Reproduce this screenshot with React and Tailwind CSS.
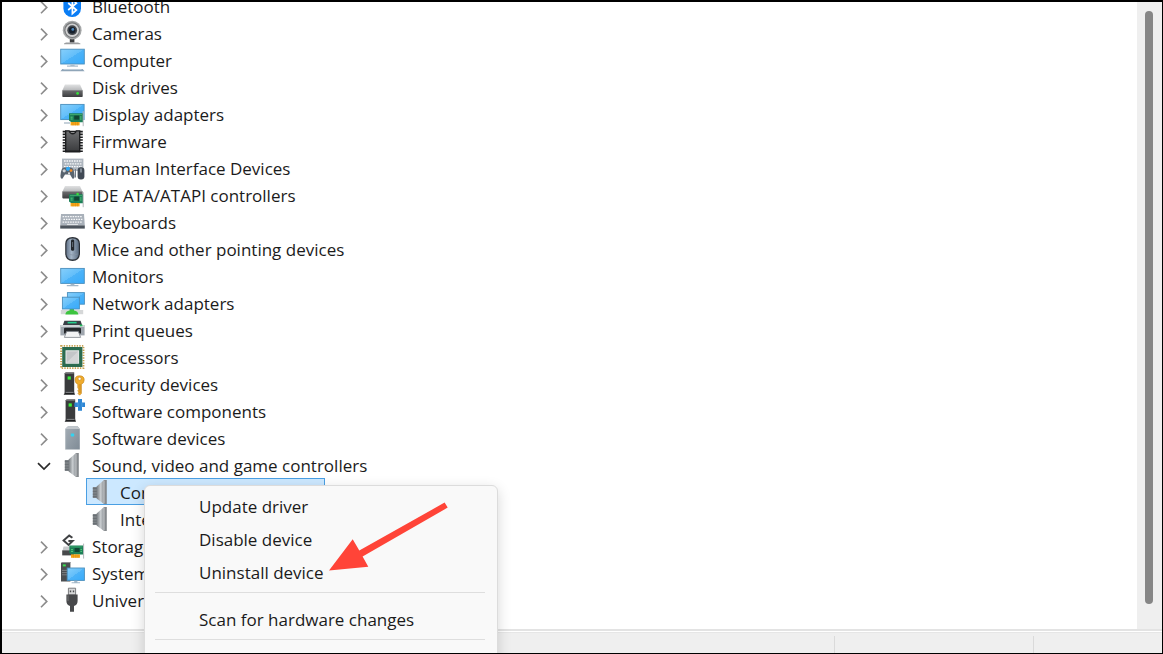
import React from "react";

const Defs = () => (
  <svg className="absolute h-0 w-0" aria-hidden="true">
    <defs>
      <linearGradient id="screen" x1="0" y1="0" x2="1" y2="1">
        <stop offset="0" stopColor="#86cffb" />
        <stop offset="0.5" stopColor="#62befa" />
        <stop offset="0.5" stopColor="#4db3f8" />
        <stop offset="1" stopColor="#38abfb" />
      </linearGradient>
      <linearGradient id="steel" x1="0" y1="0" x2="1" y2="0">
        <stop offset="0" stopColor="#74797d" />
        <stop offset="0.55" stopColor="#c9cdd0" />
        <stop offset="1" stopColor="#8b9095" />
      </linearGradient>
      <linearGradient id="lid" x1="0" y1="0" x2="0" y2="1">
        <stop offset="0" stopColor="#e0e1e2" />
        <stop offset="1" stopColor="#b4b6b8" />
      </linearGradient>
      <linearGradient id="dark" x1="0" y1="0" x2="0" y2="1">
        <stop offset="0" stopColor="#6c6d6f" />
        <stop offset="1" stopColor="#3c3d3f" />
      </linearGradient>
      <linearGradient id="slate" x1="0" y1="0" x2="1" y2="0">
        <stop offset="0" stopColor="#64748a" />
        <stop offset="0.4" stopColor="#a3b4c6" />
        <stop offset="1" stopColor="#5b6c80" />
      </linearGradient>
      <linearGradient id="tower" x1="0" y1="0" x2="1" y2="1">
        <stop offset="0" stopColor="#a4adb5" />
        <stop offset="1" stopColor="#7f8b96" />
      </linearGradient>
    </defs>
  </svg>
);

const Card = ({ x, y }) => (
  <g transform={`translate(${x} ${y})`}>
    <path d="M0 0.6H14V9.6H2.4L0 8Z" fill="#1d8058" />
    <path d="M1 1.4H13V2.4H1Z" fill="#3ba56c" />
    <rect x="5.2" y="3" width="5" height="4" fill="#114533" />
    <path d="M1.6 4.6h2M1.6 6.4h2M11 4.4h1.6M11 6.4h1.6" stroke="#5fd07f" strokeWidth="0.9" />
    <rect x="1.6" y="9.4" width="9" height="3.4" fill="#f6a619" />
    <path d="M4 9.4v3.4M6.4 9.4v3.4M8.6 9.4v3.4" stroke="#d7820c" strokeWidth="0.5" />
    <path d="M14.2 -1.4V13.6" stroke="#b4b7ba" strokeWidth="1" />
  </g>
);

const Screen = ({ x, y, w, h }) => (
  <rect x={x + 0.4} y={y + 0.4} width={w - 0.8} height={h - 0.8} fill="url(#screen)" stroke="#4a8fbd" strokeWidth="0.9" />
);

const Disk = ({ y }) => (
  <g transform={`translate(0 ${y})`}>
    <path d="M5 0H20L22.7 6H2.3Z" fill="url(#lid)" />
    <path d="M2.3 5.6H22.7V11.6Q22.7 12.4 22 12.4H3Q2.3 12.4 2.3 11.6Z" fill="url(#dark)" />
  </g>
);

const ServerTower = ({ x }) => (
  <g transform={`translate(${x} 0)`}>
    <path d="M1 1.6 2 0.6H10.6V21H1Z" fill="#3a3b3d" />
    <path d="M1 1.6 2 0.6H10.6L9.8 2H1Z" fill="#6a6b6d" />
    <path d="M0 22.8 1.4 20.4H10.6L11.4 22.8Z" fill="#1f2022" />
    <path d="M2 20.4H10" stroke="#c5c6c7" strokeWidth="0.6" />
    <rect x="4" y="4.4" width="3.2" height="3.2" fill="#3bf03b" />
  </g>
);

const Keys = ({ x, y, w }) => (
  <g stroke="#f7f8fa" strokeWidth="1.3">
    <path strokeDasharray="1.6 0.9" d={`M${x} ${y}h${w}M${x + 0.8} ${y + 2.8}h${w - 1}M${x} ${y + 5.6}h${w}`} />
  </g>
);

const drawings = {
  bluetooth: (
    <>
      <rect x="3.4" y="0" width="17.6" height="23" rx="8.6" fill="#0a7df5" />
      <path d="M8.2 9 16.4 16 12.4 19.6V5.6L16.4 9.2 8.2 16" fill="none" stroke="#fff" strokeWidth="1.7" />
    </>
  ),
  camera: (
    <>
      <path d="M9.8 17H14.4V21.6H9.8Z" fill="#3c3d3f" />
      <path d="M4 22.4 6 21.4H18L20.4 22.4V23.2H4Z" fill="#9c9ea0" />
      <circle cx="12.2" cy="9.2" r="9.4" fill="#a5a7a8" />
      <circle cx="12.2" cy="9.2" r="7.9" fill="#77797b" />
      <circle cx="12.2" cy="9.2" r="6.7" fill="#d1d2d3" />
      <circle cx="12.2" cy="9.2" r="4.9" fill="#42464b" />
      <circle cx="12.2" cy="9.2" r="3.2" fill="#16202d" />
      <circle cx="12.8" cy="8.4" r="1.4" fill="#4c87bd" />
    </>
  ),
  computer: (
    <>
      <Screen x={0.3} y={0.8} w={24.4} h={15.6} />
      <path d="M10.4 16.4H14.6V17.6H18V18.8H7V17.6H10.4Z" fill="#a9bccb" />
      <path d="M2.4 21H22.6L24.6 23.2H0.4Z" fill="#8fa5b8" />
      <path d="M3.4 21.4H21.6" stroke="#d9e3eb" strokeWidth="0.7" />
    </>
  ),
  disk: (
    <>
      <Disk y={9.6} />
      <circle cx="17.6" cy="18.4" r="1.4" fill="#35e03a" />
    </>
  ),
  display: (
    <>
      <Screen x={0.3} y={2} w={24.2} h={16} />
      <path d="M4 20.4H10V21.6H4Z" fill="#9fb2c2" />
      <Card x={9} y={10.6} />
    </>
  ),
  firmware: (
    <>
      <path d="M2.7 2.6H22.8M2.7 5.4H22.8M2.7 8.2H22.8M2.7 11H22.8M2.7 13.8H22.8M2.7 16.6H22.8M2.7 19.4H22.8M2.7 22.2H22.8" stroke="#1c1d1f" strokeWidth="1.6" />
      <path d="M5 1.2H9.6Q10 4 12.7 4T15.8 1.2H20.4V23.4H5Z" fill="#1d1e20" />
      <path d="M6.4 2.6H8.8Q9.6 5.4 12.7 5.4T16.6 2.6H19V21.6H6.4Z" fill="url(#dark)" />
    </>
  ),
  hid: (
    <>
      <path d="M2 2.6H23.4V15H2Z" fill="#aeb6bf" />
      <Keys x={4} y={5} w={18} />
      <path d="M0.4 20Q1 11.4 4.4 11.6H10.6Q14 11.4 14.6 20 14.4 23.6 12.4 22.4L10 18.6H5L2.6 22.4Q0.6 23.6 0.4 20Z" fill="#59646f" />
      <circle cx="4.2" cy="14.8" r="1.6" fill="#cdd3d8" />
      <circle cx="8" cy="12.8" r="2.1" fill="#2fa7f3" />
      <circle cx="11" cy="14.6" r="1.4" fill="#f08b25" />
      <circle cx="9" cy="17.2" r="1" fill="#e9ebed" />
      <rect x="17.6" y="11.2" width="6.8" height="12.2" rx="3.2" fill="#414a55" />
      <path d="M21 12.4v4" stroke="#aeb9c4" strokeWidth="1.2" />
      <path d="M15.4 13v8.6" stroke="#707a84" strokeWidth="1.2" />
    </>
  ),
  ide: (
    <>
      <Disk y={3} />
      <Card x={9} y={10.6} />
      <circle cx="17.6" cy="11" r="1.3" fill="#35e03a" />
    </>
  ),
  keyboard: (
    <>
      <path d="M1 4H24L24.8 15.6H0.2Z" fill="#a9b1ba" />
      <path d="M0.2 15.4H24.8V18.6H0.2Z" fill="#4c545d" />
      <Keys x={2.6} y={6.6} w={20} />
      <path d="M7 14.4H18" stroke="#e6e9ec" strokeWidth="1" />
    </>
  ),
  mouse: (
    <>
      <path d="M5.2 7Q5.2 0 12.6 0T20 7V16Q20 24 12.6 24T5.2 16Z" fill="#2b3037" />
      <path d="M6.4 7Q6.4 1.4 12.6 1.4T18.8 7V16Q18.8 22.6 12.6 22.6T6.4 16Z" fill="url(#slate)" />
      <rect x="11" y="2.4" width="3.2" height="11.4" rx="1.4" fill="#23272c" />
      <path d="M12.6 5v5" stroke="#69747f" strokeWidth="0.9" />
      <path d="M7.6 17Q12.6 19 17.6 17" stroke="#8795a4" strokeWidth="0.7" fill="none" />
    </>
  ),
  monitor: (
    <>
      <Screen x={0.3} y={4} w={24.4} h={15.8} />
      <path d="M10.6 19.8H14.4V21H18.4V22.2H6.8V21H10.6Z" fill="#a3b7c7" />
    </>
  ),
  network: (
    <>
      <Screen x={7} y={1.2} w={17.8} h={12.4} />
      <rect x="0.8" y="19" width="22.4" height="4.2" fill="#d5d7d8" />
      <path d="M9.6 17H14V19.4Q18 20 18.4 23.4H5.4Q5.6 20 9.6 19.4Z" fill="#3cc43f" />
      <Screen x={2} y={5.8} w={17.8} h={12.6} />
    </>
  ),
  printer: (
    <>
      <path d="M4.4 2.8H20.6L22.4 8H2.6Z" fill="#3a3f46" />
      <path d="M7.6 4.6H16.6" stroke="#25cf8d" strokeWidth="1.6" />
      <path d="M0.4 7H24.6V17.4H0.4Z" fill="#9fa6ae" />
      <path d="M0.4 7H24.6V9H0.4Z" fill="#cfd3d7" />
      <rect x="19.8" y="6.6" width="2.6" height="1.6" fill="#22c55e" />
      <path d="M4 10.6Q4 9.8 5 9.8H20Q21 9.8 21 10.6V15.4H4Z" fill="#25282c" />
      <path d="M6.6 13.4H18.4L20.6 19.4H4.4Z" fill="#f2f3f4" stroke="#7d838a" strokeWidth="0.8" />
    </>
  ),
  processor: (
    <>
      <rect x="1.1" y="0.9" width="22.4" height="22.2" fill="none" stroke="#c7a251" strokeWidth="1.8" strokeDasharray="1.4 1.2" />
      <rect x="2.2" y="2" width="20.2" height="20" fill="#2b6b50" />
      <rect x="6" y="5.8" width="12.6" height="12.4" fill="#c3c6c8" stroke="#e9ebec" strokeWidth="1" />
      <path d="M6.6 17.6 18 6.4V17.6Z" fill="#d4d6d7" />
    </>
  ),
  security: (
    <>
      <ServerTower x={3.6} />
      <path d="M15 8Q15 3.8 19.6 3.8T24.2 8Q24.2 11 21.4 12.2V21.4L19.6 23.2 18 21.6 18.8 20.2 17.8 18.8 18.8 17.2 17.8 15.8V12.2Q15 11 15 8Z" fill="#f0ac2d" stroke="#c17f16" strokeWidth="0.6" />
      <circle cx="19.6" cy="6.8" r="1.5" fill="#fff" stroke="#b77a18" strokeWidth="0.5" />
      <path d="M20 12v9" stroke="#b77a18" strokeWidth="0.7" />
    </>
  ),
  component: (
    <>
      <ServerTower x={4.6} />
      <path d="M18 0H22V3.6H25V8H22V11.8H18V8H14.4V3.6H18Z" fill="#2d86d4" />
      <path d="M18 3.6V8M22 3.6V8" stroke="#5aa6e4" strokeWidth="0.7" />
    </>
  ),
  software: (
    <>
      <path d="M5.2 3 8 0.2H17.6L19.8 3V23.4H5.2Z" fill="url(#tower)" />
      <path d="M5.2 3 8 0.2H17.6L19.8 3Z" fill="#c1c7cc" />
      <path d="M5.6 3.2V23" stroke="#bac1c7" strokeWidth="0.8" />
      <rect x="10.8" y="7.6" width="3.4" height="3" rx="0.8" fill="#32d3f0" />
    </>
  ),
  speaker: (
    <>
      <path d="M4.8 7H9.6V18H4.8Z" fill="#7e8387" />
      <path d="M4.8 8.6H9.6M4.8 11.4H9.6M4.8 14.2H9.6M4.8 16.6H9.6" stroke="#5f6468" strokeWidth="0.7" />
      <path d="M8.6 6.4 16 0V24L8.6 18.6Z" fill="url(#steel)" />
      <path d="M16 0H18.8V24H16Z" fill="#85898d" />
      <path d="M16 0.6V23.4" stroke="#d5d8da" strokeWidth="0.8" />
    </>
  ),
  storage: (
    <>
      <path d="M12.4 3.8 9.2 1.6 3.6 6.6 8.6 11 12.6 7H8.4" fill="none" stroke="#404244" strokeWidth="2" />
      <path d="M3.6 12.4H13V17H2.4Z" fill="#c7c9cb" />
      <path d="M2.2 16.4H14V21.4H2.2Z" fill="#48494b" />
      <Card x={9.4} y={11} />
    </>
  ),
  system: (
    <>
      <path d="M1 2 2.4 1H10.4V20.6H1Z" fill="#4b4e51" />
      <path d="M1 2 2.4 1H10.4V2Z" fill="#8b8e90" />
      <rect x="2.8" y="3.4" width="3" height="2" fill="#3be052" />
      <path d="M2 9.4H8M2 11.6H8M2 13.8H8" stroke="#929699" strokeWidth="0.7" />
      <Screen x={6.8} y={6.6} w={18} h={13.2} />
      <path d="M14.2 19.8H17.4V21.2H20V22.2H11.6V21.2H14.2Z" fill="#a3b7c7" />
    </>
  ),
  usb: (
    <>
      <path d="M8.4 0.2H15.6V7H8.4Z" fill="#d6d7d8" stroke="#6f7173" strokeWidth="0.9" />
      <path d="M9.8 2.4H11.2V4.2H9.8ZM12.8 2.4H14.2V4.2H12.8Z" fill="#4a4b4d" />
      <path d="M6.4 6.4H17.6V13Q17.6 17 14 18V23.8H10V18Q6.4 17 6.4 13Z" fill="#48494b" />
      <path d="M8 7.4V13" stroke="#737476" strokeWidth="1" />
    </>
  ),
};

const DeviceIcon = ({ name }) => (
  <svg viewBox="0 0 25 25" className="h-[25px] w-[25px] shrink-0 overflow-visible" aria-hidden="true">
    {drawings[name]}
  </svg>
);

const before = [
  ["bluetooth", "Bluetooth"],
  ["camera", "Cameras"],
  ["computer", "Computer"],
  ["disk", "Disk drives"],
  ["display", "Display adapters"],
  ["firmware", "Firmware"],
  ["hid", "Human Interface Devices"],
  ["ide", "IDE ATA/ATAPI controllers"],
  ["keyboard", "Keyboards"],
  ["mouse", "Mice and other pointing devices"],
  ["monitor", "Monitors"],
  ["network", "Network adapters"],
  ["printer", "Print queues"],
  ["processor", "Processors"],
  ["security", "Security devices"],
  ["component", "Software components"],
  ["software", "Software devices"],
];

const after = [
  ["storage", "Storage controllers"],
  ["system", "System devices"],
  ["usb", "Universal Serial Bus controllers"],
];

const Row = ({ icon, label, open = false, children }) => (
  <li role="treeitem" aria-expanded={open}>
    <div className="flex h-[27px] items-center gap-[7px] pt-[2px]">
      <div className="flex items-center gap-[8px]">
        <button type="button" aria-label={`${open ? "Collapse" : "Expand"} ${label}`} className="flex h-[25px] w-4 items-center justify-center">
          <svg viewBox="0 0 16 16" className="h-4 w-4" fill="none" aria-hidden="true">
            {open ? (
              <path d="M2 5.2 8 11 14 5.2" stroke="#2b2b2b" strokeWidth="1.7" />
            ) : (
              <path d="M5 2.6 10.8 8.4 5 14.2" stroke="#8c8c8c" strokeWidth="1.6" />
            )}
          </svg>
        </button>
        <DeviceIcon name={icon} />
      </div>
      <span>{label}</span>
    </div>
    {children}
  </li>
);

const MenuItem = ({ children }) => (
  <button type="button" role="menuitem" className="block h-[33px] w-full pl-[54px] text-left">
    {children}
  </button>
);

const Separator = () => <hr className="mr-[12px] ml-[10px] border-t border-[#dedede]" />;

const ContextMenu = () => (
  <div
    role="menu"
    className="absolute top-[7px] left-[58px] z-10 h-[240px] w-[354px] rounded-md border border-[#dcdcdc] bg-[#f9f9f9] pt-[4px] shadow-[0_4px_14px_rgba(0,0,0,0.16)]"
  >
    <MenuItem>Update driver</MenuItem>
    <MenuItem>Disable device</MenuItem>
    <MenuItem>Uninstall device</MenuItem>
    <div className="pt-[3px] pb-[10px]">
      <Separator />
    </div>
    <MenuItem>Scan for hardware changes</MenuItem>
    <div className="pt-[3px]">
      <Separator />
    </div>
    <svg viewBox="0 0 120 70" className="pointer-events-none absolute top-[16px] left-[184px] h-[70px] w-[120px]" aria-hidden="true">
      <path d="M0 68.5 23.7 37.3 30.3 48.4 115.6 0.6 118.7 5.6 33.6 54.4 39.3 64.8Z" fill="#ff4438" />
    </svg>
  </div>
);

export default function App() {
  return (
    <div className="relative flex min-h-screen flex-col overflow-hidden border-t-2 border-r border-b border-l-2 border-black bg-white font-['Open_Sans','Noto_Sans',sans-serif] text-[17px] leading-[25px] text-[#1b1b1b]">
      <Defs />
      <main className="flex flex-1">
        <ul role="tree" aria-label="Devices" className="-mt-[10px] flex-1 pb-[14px] pl-[34px] whitespace-nowrap">
          {before.map(([icon, label]) => (
            <Row key={label} icon={icon} label={label} />
          ))}
          <Row icon="speaker" label="Sound, video and game controllers" open>
            <ul role="group" className="pl-[50px]">
              <li role="treeitem" aria-selected="true" className="relative w-[239px]">
                <div className="flex h-[27px] items-center gap-[7px] border border-[#4a9fe3] bg-[#cce8ff] pt-[2px] pl-px">
                  <DeviceIcon name="speaker" />
                  <span>Conexant ISST Audio</span>
                </div>
                <ContextMenu />
              </li>
              <li role="treeitem" className="flex h-[27px] items-center gap-[7px] pt-[2px] pl-[2px]">
                <DeviceIcon name="speaker" />
                <span>Intel(R) Display Audio</span>
              </li>
            </ul>
          </Row>
          {after.map(([icon, label]) => (
            <Row key={label} icon={icon} label={label} />
          ))}
        </ul>
        <div className="flex w-[25px] justify-center bg-[#efefef] pt-[9px] pr-px pb-[25px]">
          <div className="w-2 rounded-full bg-[#868686]" />
        </div>
      </main>
      <footer className="border-t-2 border-[#e3e3e3]">
        <div className="mt-px flex h-[21px] justify-end border-t border-[#e6e6e6] bg-[#efefef] pt-[3px]">
          <div className="w-[199px] border-l border-[#dadada]" />
          <div className="w-[129px] border-l border-[#dadada]" />
        </div>
      </footer>
    </div>
  );
}
